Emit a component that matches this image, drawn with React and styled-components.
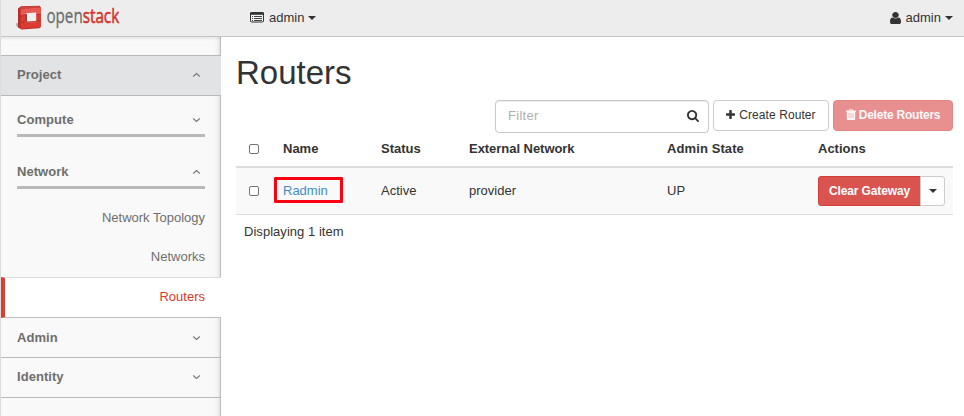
import React from 'react';
import styled, { createGlobalStyle } from 'styled-components';

const Global = createGlobalStyle`
  * { box-sizing: border-box; }
  body {
    margin: 0;
    background: #fff;
    color: #333;
    font: 13px/18px "Liberation Sans", Arial, sans-serif;
  }
`;

const Page = styled.div`
  display: flex;
  flex-direction: column;
  height: 416px;
  overflow: hidden;
  border-left: 1px solid #dcdcdc;
`;

const TopBar = styled.header`
  display: flex;
  flex: none;
  height: 37px;
  background: #ededed;
  border-bottom: 1px solid #c4c4c4;
`;

const Brand = styled.div`
  width: 249px;
  padding-left: 14px;
`;

const Context = styled.div`
  display: flex;
  align-items: center;
  height: 35px;
  color: #333;
`;

const UserMenu = styled(Context)`
  margin-left: auto;
  margin-right: 11px;
`;

const Label = styled.span`
  margin: 0 4px 0 5px;
`;

const Caret = styled.span`
  width: 0;
  height: 0;
  border: 4px solid transparent;
  border-top-color: #333;
  border-bottom: 0;
`;

const Body = styled.div`
  display: flex;
  flex: 1;
`;

const Sidebar = styled.nav`
  display: flex;
  flex-direction: column;
  width: 220px;
  padding-top: 18px;
  color: #6e6e6e;
  background: linear-gradient(to bottom, rgba(0,0,0,0.07), transparent 4px) no-repeat,
    linear-gradient(to left, #bdbdbd 1px, #e2e2e2 1px, #f1f1f1 3px, #f9f9f9 7px);
`;

const Section = styled.div`
  display: flex;
  align-items: center;
  justify-content: space-between;
  height: ${(p) => p.$height}px;
  padding: ${(p) => p.$drop || 0}px 20px 1px 16px;
  font-weight: bold;
  letter-spacing: 0.05px;
  border-bottom: 1px solid #b9b9b9;
  border-top: ${(p) => (p.$active ? '1px solid #b9b9b9' : '0')};
  background: ${(p) => (p.$active ? '#e1e3e4' : 'transparent')};
`;

const Group = styled.div`
  display: flex;
  justify-content: space-between;
  align-items: center;
  height: 27px;
  margin: ${(p) => p.$gap}px 16px 0;
  padding: 0 4px 4px 0;
  font-weight: bold;
  letter-spacing: 0.05px;
  border-bottom: 3px solid #b9b9b9;
`;

const Item = styled.div`
  height: ${(p) => p.$height}px;
  padding: ${(p) => p.$top}px 16px 0 0;
  text-align: right;
`;

const CurrentItem = styled(Item)`
  color: #dd3726;
  background: #fff;
  border-top: 1px solid #ddd;
  border-bottom: 1px solid #bcbcbc;
  border-left: 4px solid #dd3d2c;
`;

const Main = styled.main`
  width: 717px;
  margin-left: 15px;
`;

const Title = styled.h1`
  height: 63px;
  margin: 0;
  padding-top: 16px;
  font-size: 33px;
  line-height: 40px;
  font-weight: normal;
`;

const Toolbar = styled.div`
  display: flex;
  justify-content: flex-end;
  gap: 4px;
  height: 30px;
`;

const Filter = styled.div`
  display: flex;
  align-items: center;
  justify-content: space-between;
  width: 214px;
  height: 33px;
  padding: 0 9px 2px 12px;
  color: #b0b0b0;
  letter-spacing: 0.3px;
  border: 1px solid #c8c8c8;
  border-radius: 4px;
  box-shadow: inset 0 1px 1px rgba(0,0,0,0.08);
`;

const Button = styled.button`
  display: flex;
  align-items: center;
  justify-content: center;
  gap: 4px;
  width: ${(p) => p.$width}px;
  height: 31px;
  padding: 0 0 2px;
  font: 12px "Liberation Sans", Arial, sans-serif;
  letter-spacing: 0.08px;
  color: #333;
  background: #fff;
  border: 1px solid #ccc;
  border-radius: 4px;
`;

const DeleteButton = styled(Button)`
  gap: 3px;
  font-weight: bold;
  letter-spacing: -0.22px;
  color: #fff8f8;
  background: #e89090;
  border-color: #e58480;
`;

const Table = styled.table`
  width: 717px;
  table-layout: fixed;
  border-collapse: separate;
  border-spacing: 0;
`;

const Head = styled.th`
  width: ${(p) => p.$width}px;
  height: 38px;
  padding: 2px 8px 0;
  text-align: left;
  letter-spacing: ${(p) => p.$spacing || 0}px;
  border-bottom: 2px solid #ddd;
`;

const Cell = styled.td`
  height: 47px;
  padding: 0 8px;
  background: #f9f9f9;
  border-bottom: 1px solid #ddd;
`;

const Check = styled.span`
  display: block;
  width: 10px;
  height: 10px;
  margin: -1px 0 0 5px;
  background: #fff;
  border: 1px solid #747474;
  border-radius: 2px;
`;

const NameLink = styled.a`
  display: flex;
  align-items: center;
  width: 69px;
  height: 26px;
  margin: -2px 0 0 -9px;
  padding: 1px 0 0 6px;
  color: #428bca;
  border: 3px solid #fa0010;
  border-radius: 1px;
`;

const Split = styled.div`
  display: flex;
`;

const ClearButton = styled(Button)`
  height: 30px;
  padding-bottom: 1px;
  color: #fff;
  font-weight: bold;
  letter-spacing: -0.12px;
  background: #d9534f;
  border-color: #d43f3a;
  border-radius: 3px 0 0 3px;
`;

const MenuButton = styled(Button)`
  height: 30px;
  padding-bottom: 0;
  margin-left: -1px;
  border-radius: 0 3px 3px 0;
`;

const Footer = styled.div`
  padding: 8px;
  letter-spacing: 0.04px;
`;

const Logo = () => (
  <svg width="110" height="36" viewBox="15 0 110 36">
    <path d="M16 23.5l3-1v4l1.5 2-4-2z" fill="#aaa" />
    <path d="M18 8.5l3-2.3 18.5-.4 1.3 1.7v19.3l-1.4 1.4-17.9 1.2-3.5-2z" fill="#b92f2b" />
    <path d="M20.7 8.7L40.8 7.5v19.7L20.7 28.7z" fill="#dc3b31" />
    <path d="M20.7 8.7L40.8 7.5v7L20.7 15.4z" fill="#e85750" />
    <path d="M18.7 8.4l2.5-2 18.5-.3-2 1.7z" fill="#cc453f" />
    <path d="M25.2 13.2l11-.7v9.9l-11 .7z" fill="#f3eeee" />
    <path d="M25.2 13.2l1.7 1v7.3l-1.7 1.6z" fill="#98231f" />
    <path d="M25.2 23.1l1.7-1.6 9.3-.5v1.4z" fill="#ba3029" />
    <path d="M18.2 15.3l2.5.7 4.5-.4M36.2 14.6l4.6-.3M18.2 21.7l2.5.7 4.5-.3M36.2 21l4.6-.3" stroke="#b52a25" strokeWidth=".8" fill="none" />
    <text transform="translate(46.4 23.2) scale(.742 1)" fontFamily="Open Sans, sans-serif" fontSize="20.5" fill="#6c6c6c" stroke="#6c6c6c" strokeWidth=".25">
      open<tspan fill="#d5332c" stroke="#d5332c" strokeWidth=".6">stack</tspan>
    </text>
  </svg>
);

const ListIcon = () => (
  <svg width="14" height="13" viewBox="0 0 14 13">
    <rect x=".5" y="1.5" width="13" height="9.5" rx="1" fill="#f4f4f4" stroke="#333" />
    <path d="M0 1.5h14v2.3H0z" fill="#333" />
    <path d="M2 5.5h1M4 5.5h8M2 7.5h1M4 7.5h8M2 9.5h1M4 9.5h8" stroke="#444" strokeWidth="1" />
  </svg>
);

const UserIcon = () => (
  <svg width="11" height="12" viewBox="0 128 1280 1536" preserveAspectRatio="none" fill="#333">
    <path d="M1280 1399q0 109-62.5 187t-150.5 78h-854q-88 0-150.5-78t-62.5-187q0-85 8.5-160.5t31.5-152 58.5-131 94-89 134.5-34.5q131 128 313 128t313-128q76 0 134.5 34.5t94 89 58.5 131 31.5 152 8.5 160.5zm-256-887q0 159-112.5 271.5t-271.5 112.5-271.5-112.5-112.5-271.5 112.5-271.5 271.5-112.5 271.5 112.5 112.5 271.5z" />
  </svg>
);

const SearchIcon = () => (
  <svg width="12" height="12" viewBox="64 128 1664 1664" fill="#333">
    <path d="M1216 832q0-185-131.5-316.5t-316.5-131.5-316.5 131.5-131.5 316.5 131.5 316.5 316.5 131.5 316.5-131.5 131.5-316.5zm512 832q0 52-38 90t-90 38q-54 0-90-38l-343-342q-179 124-399 124-143 0-273.5-55.5t-225-150-150-225-55.5-273.5 55.5-273.5 150-225 225-150 273.5-55.5 273.5 55.5 225 150 150 225 55.5 273.5q0 220-124 399l343 343q37 37 37 90z" />
  </svg>
);

const PlusIcon = () => (
  <svg width="9" height="9" viewBox="192 128 1408 1408" fill="#333">
    <path d="M1600 736v192q0 40-28 68t-68 28h-416v416q0 40-28 68t-68 28h-192q-40 0-68-28t-28-68v-416h-416q-40 0-68-28t-28-68v-192q0-40 28-68t68-28h416v-416q0-40 28-68t68-28h192q40 0 68 28t28 68v416h416q40 0 68 28t28 68z" />
  </svg>
);

const TrashIcon = () => (
  <svg width="10" height="11" viewBox="0 0 10 11">
    <path d="M0 1.6h2.9L3.5.2h3l.6 1.4H10v1.1H9.2v7q0 1.2-1 1.2H1.8q-1 0-1-1.2v-7H0z" fill="#fff8f8" />
    <path d="M3 4v5.3M5 4v5.3M7 4v5.3M3.9 1.4h2.2" stroke="#e89090" strokeWidth=".6" />
  </svg>
);

const Chevron = ({ up }) => (
  <svg width="9" height="6" viewBox="0 0 9 6" fill="none" stroke="#777" strokeWidth="1.1">
    <path d={up ? 'M1.2 4.5l3.3-3 3.3 3' : 'M1.2 1.5l3.3 3 3.3-3'} />
  </svg>
);

export default function App() {
  return (
    <>
      <Global />
      <Page>
        <TopBar>
          <Brand><Logo /></Brand>
          <Context><ListIcon /><Label>admin</Label><Caret /></Context>
          <UserMenu><UserIcon /><Label>admin</Label><Caret /></UserMenu>
        </TopBar>
        <Body>
          <Sidebar>
            <Section $height={41} $active>Project<Chevron up /></Section>
            <Group $gap={14}>Compute<Chevron /></Group>
            <Group $gap={25}>Network<Chevron up /></Group>
            <Item $height={39} $top={20}>Network Topology</Item>
            <Item $height={49} $top={20}>Networks</Item>
            <CurrentItem $height={41} $top={10}>Routers</CurrentItem>
            <Section $height={40} $drop={2}>Admin<Chevron /></Section>
            <Section $height={40}>Identity<Chevron /></Section>
          </Sidebar>
          <Main>
            <Title>Routers</Title>
            <Toolbar>
              <Filter>Filter<SearchIcon /></Filter>
              <Button $width={116}><PlusIcon />Create Router</Button>
              <DeleteButton $width={120}><TrashIcon />Delete Routers</DeleteButton>
            </Toolbar>
            <Table>
              <thead>
                <tr>
                  <Head $width={39}><Check /></Head>
                  <Head $width={98}>Name</Head>
                  <Head $width={88}>Status</Head>
                  <Head $width={198} $spacing={-0.04}>External Network</Head>
                  <Head $width={151} $spacing={0.1}>Admin State</Head>
                  <Head $width={143}>Actions</Head>
                </tr>
              </thead>
              <tbody>
                <tr>
                  <Cell><Check /></Cell>
                  <Cell><NameLink>Radmin</NameLink></Cell>
                  <Cell>Active</Cell>
                  <Cell>provider</Cell>
                  <Cell>UP</Cell>
                  <Cell>
                    <Split>
                      <ClearButton $width={103}>Clear Gateway</ClearButton>
                      <MenuButton $width={25} aria-label="More actions"><Caret /></MenuButton>
                    </Split>
                  </Cell>
                </tr>
              </tbody>
            </Table>
            <Footer>Displaying 1 item</Footer>
          </Main>
        </Body>
      </Page>
    </>
  );
}
